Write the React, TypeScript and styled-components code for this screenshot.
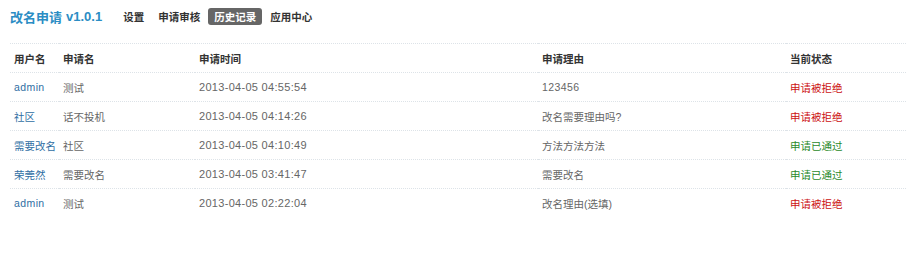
import React from "react";
import styled, { createGlobalStyle } from "styled-components";

const GlobalStyle = createGlobalStyle`
  html, body {
    margin: 0;
    padding: 0;
    background: #fff;
  }
  body {
    font-family: "Liberation Sans", "Noto Sans CJK SC", sans-serif;
    font-size: 10.5px;
    color: #666;
  }
`;

// STYLED COMPONENTS
const Page = styled.div`
  padding: 0 4px 0 10px;
`;

const TopBar = styled.div`
  height: 32px;
  display: flex;
  align-items: center;
`;

const Title = styled.h1`
  margin: 0;
  font-size: 13px;
  font-weight: 700;
  color: #2b8dc4;
  font-family: "Liberation Sans", "Noto Sans CJK SC", sans-serif;
  display: flex;
  align-items: center;
  gap: 4px;
`;

const Nav = styled.nav`
  display: flex;
  align-items: center;
  gap: 2px;
  margin-left: 15px;
`;

const NavItem = styled.a<{ $active?: boolean }>`
  display: flex;
  align-items: center;
  height: 17px;
  padding: 0 6px;
  border-radius: 3px;
  font-size: 10.5px;
  font-weight: 700;
  color: ${(p) => (p.$active ? "#fff" : "#333")};
  background: ${(p) => (p.$active ? "#666" : "transparent")};
  text-decoration: none;
  cursor: pointer;
`;

const Table = styled.table`
  margin-top: 11px;
  width: 100%;
  border-collapse: collapse;
  table-layout: fixed;
  border-top: 1px dotted #dde3e8;
`;

const Row = styled.tr<{ $last?: boolean }>`
  height: 29px;
  border-bottom: ${(p) => (p.$last ? "none" : "1px dotted #dde3e8")};
`;

const Head = styled.th<{ $w?: number }>`
  width: ${(p) => (p.$w ? `${p.$w}px` : "auto")};
  padding: 0 0 0 4px;
  text-align: left;
  font-weight: 700;
  color: #333;
  font-size: 10.5px;
`;

const Cell = styled.td<{ $latin?: boolean }>`
  padding: 0 0 0 4px;
  color: #666;
  white-space: nowrap;
  letter-spacing: ${(p) => (p.$latin ? "0.4px" : "0")};
`;

const TimeCell = styled(Cell)`
  font-size: 11px;
  letter-spacing: 0.3px;
`;

const UserLink = styled.a<{ $latin?: boolean }>`
  color: #2f6ea3;
  text-decoration: none;
  letter-spacing: ${(p) => (p.$latin ? "0.4px" : "0")};
`;

const Status = styled.span<{ $ok: boolean }>`
  color: ${(p) => (p.$ok ? "#2a8a2a" : "#cc1111")};
`;

// DATA
interface Record {
  user: string;
  name: string;
  time: string;
  reason: string;
  ok: boolean;
}

const records: Record[] = [
  { user: "admin", name: "测试", time: "2013-04-05 04:55:54", reason: "123456", ok: false },
  { user: "社区", name: "话不投机", time: "2013-04-05 04:14:26", reason: "改名需要理由吗?", ok: false },
  { user: "需要改名", name: "社区", time: "2013-04-05 04:10:49", reason: "方法方法方法", ok: true },
  { user: "荣莞然", name: "需要改名", time: "2013-04-05 03:41:47", reason: "需要改名", ok: true },
  { user: "admin", name: "测试", time: "2013-04-05 02:22:04", reason: "改名理由(选填)", ok: false },
];

const navItems = ["设置", "申请审核", "历史记录", "应用中心"];

const isLatin = (s: string) => /^[\x00-\x7f]+$/.test(s);

export default function App() {
  return (
    <Page>
      <GlobalStyle />
      <TopBar>
        <Title>
          <span>改名申请</span>
          <span>v1.0.1</span>
        </Title>
        <Nav>
          {navItems.map((item) => (
            <NavItem key={item} $active={item === "历史记录"}>
              {item}
            </NavItem>
          ))}
        </Nav>
      </TopBar>
      <Table>
        <thead>
          <Row>
            <Head $w={45}>用户名</Head>
            <Head $w={132}>申请名</Head>
            <Head $w={339}>申请时间</Head>
            <Head $w={244}>申请理由</Head>
            <Head>当前状态</Head>
          </Row>
        </thead>
        <tbody>
          {records.map((r, i) => (
            <Row key={i} $last={i === records.length - 1}>
              <Cell>
                <UserLink href="#" $latin={isLatin(r.user)}>
                  {r.user}
                </UserLink>
              </Cell>
              <Cell>{r.name}</Cell>
              <TimeCell>{r.time}</TimeCell>
              <Cell $latin={isLatin(r.reason)}>{r.reason}</Cell>
              <Cell>
                <Status $ok={r.ok}>{r.ok ? "申请已通过" : "申请被拒绝"}</Status>
              </Cell>
            </Row>
          ))}
        </tbody>
      </Table>
    </Page>
  );
}
